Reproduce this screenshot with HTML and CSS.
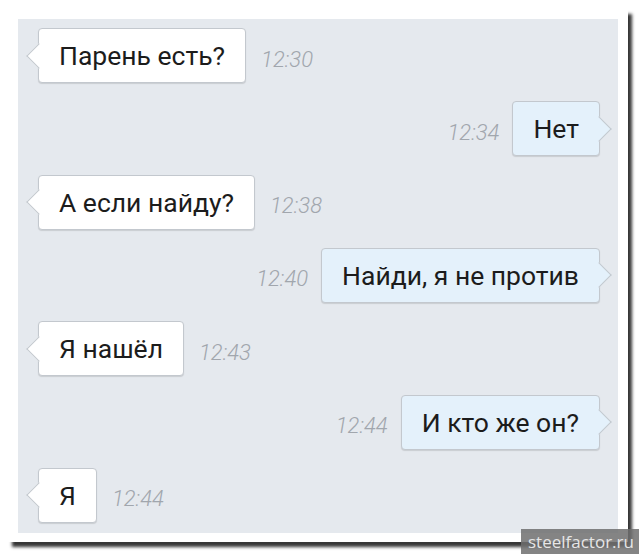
FILE: index.html
```html
<!DOCTYPE html>
<html lang="ru">
<head>
<meta charset="utf-8">
<link rel="stylesheet" href="styles.css">
</head>
<body>
<div class="frame">
  <div class="chat">
    <div class="row in"><div class="bubble">Парень есть?</div><span class="time">12:30</span></div>
    <div class="row out"><span class="time">12:34</span><div class="bubble">Нет</div></div>
    <div class="row in"><div class="bubble">А если найду?</div><span class="time">12:38</span></div>
    <div class="row out"><span class="time">12:40</span><div class="bubble">Найди, я не против</div></div>
    <div class="row in"><div class="bubble">Я нашёл</div><span class="time">12:43</span></div>
    <div class="row out"><span class="time">12:44</span><div class="bubble">И кто же он?</div></div>
    <div class="row in"><div class="bubble">Я</div><span class="time">12:44</span></div>
  </div>
</div>
<div class="watermark">steelfactor.ru</div>
</body>
</html>
```
FILE: styles.css
```css
html, body {
  margin: 0;
  padding: 0;
  background: #ffffff;
  width: 639px;
  height: 554px;
  overflow: hidden;
  font-family: Roboto, "Noto Sans", sans-serif;
}
body {
  position: relative;
}
.frame {
  margin: 9px 0 0 8px;
  width: 600px;
  height: 514px;
  padding: 10px 10px 9px 10px;
  background: #ffffff;
  box-shadow: 4px 5px 3px rgba(20, 20, 20, 0.85);
}
.chat {
  box-sizing: border-box;
  height: 100%;
  background: #e5e9ee;
  padding: 9px 18px 0 20px;
  display: flex;
  flex-direction: column;
  gap: 18.33px;
}
.row {
  display: flex;
  align-items: center;
  height: 55px;
}
.row.in { gap: 15px; }
.row.out { justify-content: flex-end; gap: 13px; }
.bubble {
  position: relative;
  box-sizing: border-box;
  height: 55px;
  display: flex;
  align-items: center;
  padding: 0 20px;
  font-size: 26.5px;
  color: #1c1c1c;
  background: #ffffff;
  border: 1px solid #c3c8ce;
  border-radius: 4px;
  box-shadow: 0 1px 1px rgba(0, 0, 0, 0.12);
}
.bubble::before {
  content: "";
  position: absolute;
  top: 50%;
  width: 17px;
  height: 17px;
  background: inherit;
  margin-top: -9px;
  transform: rotate(45deg);
}
.in .bubble::before {
  left: -9px;
  border-left: 1px solid #c3c8ce;
  border-bottom: 1px solid #c3c8ce;
}
.out .bubble {
  background: #e4f1fb;
}
.out .bubble::before {
  right: -9px;
  border-right: 1px solid #c3c8ce;
  border-top: 1px solid #c3c8ce;
}
.time {
  font-size: 22px;
  font-weight: 300;
  font-style: italic;
  color: #a1a6ad;
  padding-top: 7px;
}
.watermark {
  position: absolute;
  right: 0;
  bottom: 0;
  width: 118px;
  height: 25px;
  box-sizing: border-box;
  padding-left: 7px;
  background: rgba(110, 110, 110, 0.85);
  color: #e6e6e6;
  font-family: "Open Sans", sans-serif;
  font-size: 17px;
  line-height: 25px;
}
```
